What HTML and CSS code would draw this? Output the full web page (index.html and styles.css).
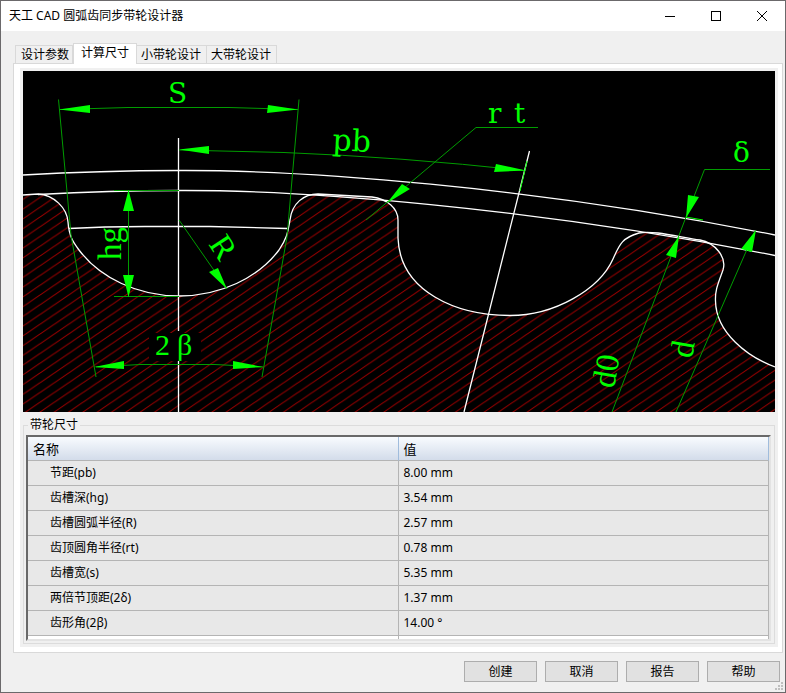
FILE: index.html
```html
<!DOCTYPE html>
<html lang="zh-CN">
<head>
<meta charset="utf-8">
<title>天工 CAD 圆弧齿同步带轮设计器</title>
<link rel="stylesheet" href="styles.css">
</head>
<body>
<main class="window">
  <header class="titlebar">
    <h1 class="title">天工 CAD 圆弧齿同步带轮设计器</h1>
    <div class="controls">
      <button class="control" type="button" aria-label="最小化"><svg viewBox="0 0 12 12"><path d="M1 6.5H11"/></svg></button>
      <button class="control" type="button" aria-label="最大化"><svg viewBox="0 0 12 12"><path d="M1.5 1.5H10.5V10.5H1.5Z"/></svg></button>
      <button class="control" type="button" aria-label="关闭"><svg viewBox="0 0 12 12"><path class="smooth" d="M1 1L11 11M11 1L1 11"/></svg></button>
    </div>
  </header>

  <div class="content">
    <div class="tabs" role="tablist">
      <button class="tab" type="button" role="tab">设计参数</button>
      <button class="tab active" type="button" role="tab" aria-selected="true">计算尺寸</button>
      <button class="tab" type="button" role="tab">小带轮设计</button>
      <button class="tab" type="button" role="tab">大带轮设计</button>
    </div>
    <section class="panel" role="tabpanel">
      <div class="page">
        <svg class="drawing" viewBox="23 71 752 341">
          <defs>
            <pattern id="hatch" patternUnits="userSpaceOnUse" x="212" y="412" width="14.33" height="9.75">
              <path class="hatch-line" d="M-1 10.43L15.33 -.68M-1 .68L1 -.68M13.33 10.43L15.33 9.07"/>
            </pattern>
          </defs>
          <rect x="23" y="71" width="752" height="341"/>
          <path fill="url(#hatch)" d="M23 195L38 194C54 195 67 208 68 222C69 236 73 242 79 250C100 278 138 296 179 296C220 296 258 278 279 250C288 237 288 230 290 220C292 203 304 194 318 194L372 197C387 199 398 208 398 220V238C400 292 457 315.500 510 315.500C554 315.500 599 290 613 259C619 246 621 238 639 233C653 230 679 237 700 240C715 243 727 257 723 270C718 284 715 290 715.500 301C716 333 748 357 775 367V412H23Z"/>
          <rect x="149" y="333" width="52" height="28"/>

          <g class="outline">
            <path d="M23 195L38 194C54 195 67 208 68 222C69 236 73 242 79 250C100 278 138 296 179 296C220 296 258 278 279 250C288 237 288 230 290 220C292 203 304 194 318 194L372 197C387 199 398 208 398 220V238C400 292 457 315.500 510 315.500C554 315.500 599 290 613 259C619 246 621 238 639 233C653 230 679 237 700 240C715 243 727 257 723 270C718 284 715 290 715.500 301C716 333 748 357 775 367"/>
            <path d="M23 175Q100 170.500 179 170.500C300 170 530 186 775 235"/>
            <path d="M38 194.500Q110 190.500 179 190.500C300 190 530 207 775 255.500"/>
            <path d="M69 228.500L105 227L145 226.500H210L287 228.500"/>
            <path d="M178.500 138V331M178.500 361V412M529.500 151L464 412"/>
          </g>

          <g class="dim">
            <path d="M58.500 99.500L71 235L96 377M299 99.500L287 237L262 377"/>
            <path d="M60 109.500L128 107.500H229L298 109.500"/>
            <path d="M179 150L284 152.500Q400 157 524 170.500"/>
            <path d="M114 190.500H179M114 296.500H179M128.500 191V296"/>
            <path d="M179 220L227 289M96 367L140 364.500H215L263 367"/>
            <path d="M538 127.500H476L366 220M770 169.500H704.500L686 217L612 412M755 231L676 412"/>
            <path class="bright" d="M527 161L520 191M686 217L703 220"/>
          </g>
          <g class="arrows">
            <path d="M59 109.500L90 105V113ZM298 109.500L268 105L267 113Z"/>
            <path d="M179 149.500L209 146V154ZM526 170.500L496 164L494 172Z"/>
            <path d="M128.500 190L123 211H134ZM128.500 297L123 275H134Z"/>
            <path d="M227 289L209 272L218 268ZM387 203L402 184L410 189Z"/>
            <path d="M686 218L688 195L699 197ZM679 236L666 255L676 258Z"/>
            <path d="M756 230L741 249L752 252ZM94 367L124 361V369ZM263 367L233 361V369Z"/>
          </g>
          <g class="labels">
            <text x="168" y="103">S</text>
            <text x="332" y="150" class="wide" transform="rotate(3 332 150)">pb</text>
            <text x="488" y="123">r</text>
            <text x="514" y="123">t</text>
            <text x="733" y="162">δ</text>
            <g class="narrow">
              <text x="155" y="355">2</text>
              <text x="177" y="355">β</text>
              <text x="121" y="260" class="tall" transform="rotate(-90 121 260)">hg</text>
              <text x="208" y="244" class="tall" transform="rotate(57 208 244)">R</text>
              <text x="614" y="389" class="tall" transform="rotate(-80 614 389)">d0</text>
              <text x="692" y="359" class="tall" transform="rotate(-80 692 359)">d</text>
            </g>
          </g>
        </svg>

        <fieldset class="group">
          <legend>带轮尺寸</legend>
          <div class="table-frame">
            <table class="sizes">
              <thead><tr><th scope="col">名称</th><th scope="col">值</th></tr></thead>
              <tbody>
                <tr><td>节距(pb)</td><td>8.00 mm</td></tr>
                <tr><td>齿槽深(hg)</td><td>3.54 mm</td></tr>
                <tr><td>齿槽圆弧半径(R)</td><td>2.57 mm</td></tr>
                <tr><td>齿顶圆角半径(rt)</td><td>0.78 mm</td></tr>
                <tr><td>齿槽宽(s)</td><td>5.35 mm</td></tr>
                <tr><td>两倍节顶距(2δ)</td><td>1.37 mm</td></tr>
                <tr><td>齿形角(2β)</td><td>14.00 °</td></tr>
                <tr class="rest"><td></td><td></td></tr>
              </tbody>
            </table>
          </div>
        </fieldset>
      </div>
    </section>
  </div>

  <footer class="actions">
    <button class="action" type="button">创建</button>
    <button class="action" type="button">取消</button>
    <button class="action" type="button">报告</button>
    <button class="action" type="button">帮助</button>
    <svg class="grip" viewBox="0 0 8 8"><path d="M6 0h2v2H6zM3 3h2v2H3zM6 3h2v2H6zM0 6h2v2H0zM3 6h2v2H3zM6 6h2v2H6z"/></svg>
  </footer>
</main>
</body>
</html>
```
FILE: styles.css
```css
* { box-sizing: border-box; }

body {
  margin: 0;
  font: 12px/16px "Noto Sans", "Noto Sans CJK SC", sans-serif;
  color: #000;
}

button { font: inherit; color: inherit; }

.window {
  display: flex;
  flex-direction: column;
  min-height: 100vh;
  border: 1px solid #6b696b;
  background: #f0f0f0;
}

.titlebar {
  display: flex;
  justify-content: space-between;
  height: 30px;
  background: #fff;
}

.title {
  margin: 0;
  padding-left: 8px;
  font-size: 12px;
  font-weight: 400;
  line-height: 30px;
}

.controls { display: flex; }

.control {
  display: flex;
  align-items: center;
  justify-content: center;
  width: 46px;
  padding: 0;
  border: 0;
  background: none;
}

.control svg {
  width: 12px;
  height: 12px;
  fill: none;
  stroke: #000;
  shape-rendering: crispEdges;
}

.control .smooth { shape-rendering: auto; }

.content {
  display: flex;
  flex: 1;
  flex-direction: column;
  padding: 12px 2px 0 12px;
}

.tabs {
  display: flex;
  align-items: flex-end;
  padding-left: 2px;
}

.tab {
  height: 18px;
  padding: 1px 5px 0 4px;
  border: 1px solid #d9d9d9;
  border-bottom: 0;
  background: #f0f0f0;
  line-height: 16px;
  white-space: nowrap;
}

.tab + .tab { border-left: 0; }
.tab:first-child { padding: 1px 3px 0 5px; }

.tab.active {
  z-index: 1;
  height: 21px;
  margin-bottom: -1px;
  padding: 0 7px 2px;
  border-left: 1px solid #d9d9d9;
  background: #fff;
}

.panel {
  flex: 1;
  padding: 4px 4px 5px 6px;
  border: 1px solid #d9d9d9;
  background: #fff;
}

.page {
  padding: 3px;
  background: #f0f0f0;
}

.drawing {
  display: block;
  width: 100%;
}

.hatch-line { stroke: #a80000; }

.outline {
  fill: none;
  stroke: #fff;
  stroke-width: 1.3;
}

.dim {
  fill: none;
  stroke: #009c00;
}

.dim .bright { stroke: #0f0; }
.arrows { fill: #0f0; }

.labels {
  fill: #0f0;
  font-family: "DejaVu Serif", serif;
  font-size: 28px;
}

.wide { font-size: 30px; }

.narrow {
  font-family: "Liberation Serif", serif;
  font-size: 30px;
}

.tall { font-size: 33px; }

.group {
  min-width: 0;
  margin: 5px 0 0;
  padding: 2px 3px 2px 2px;
  border: 1px solid #dcdcdc;
}

.group legend {
  margin-left: 2px;
  padding: 0 2px;
}

.table-frame {
  border: 2px solid #e3e3e3;
  border-top-color: #696969;
  border-left-color: #696969;
  background: #fff;
}

.sizes {
  width: 100%;
  border-collapse: separate;
  border-spacing: 0;
  table-layout: fixed;
}

.sizes th,
.sizes td {
  height: 25px;
  padding: 0 5px;
  border-right: 1px solid #b4b4b4;
  border-bottom: 1px solid #b4b4b4;
  background: #e8e8e8;
  text-align: left;
}

.sizes th {
  height: 24px;
  border-right-color: #a0bcdc;
  background: linear-gradient(#f8fbfe, #d3dcea);
  font-size: 13px;
  font-weight: 400;
}

.sizes td:first-child { padding-left: 22px; }

.sizes .rest td {
  height: 3px;
  border-bottom: 0;
  background: #fff;
}

.actions {
  position: relative;
  display: flex;
  justify-content: flex-end;
  gap: 8px;
  padding: 8px 5px 10px;
}

.action {
  width: 73px;
  height: 21px;
  padding: 0;
  border: 1px solid #adadad;
  background: #e1e1e1;
  line-height: 16px;
}

.grip {
  position: absolute;
  right: 2px;
  bottom: 2px;
  width: 8px;
  height: 8px;
  fill: #bfbfbf;
}
```
